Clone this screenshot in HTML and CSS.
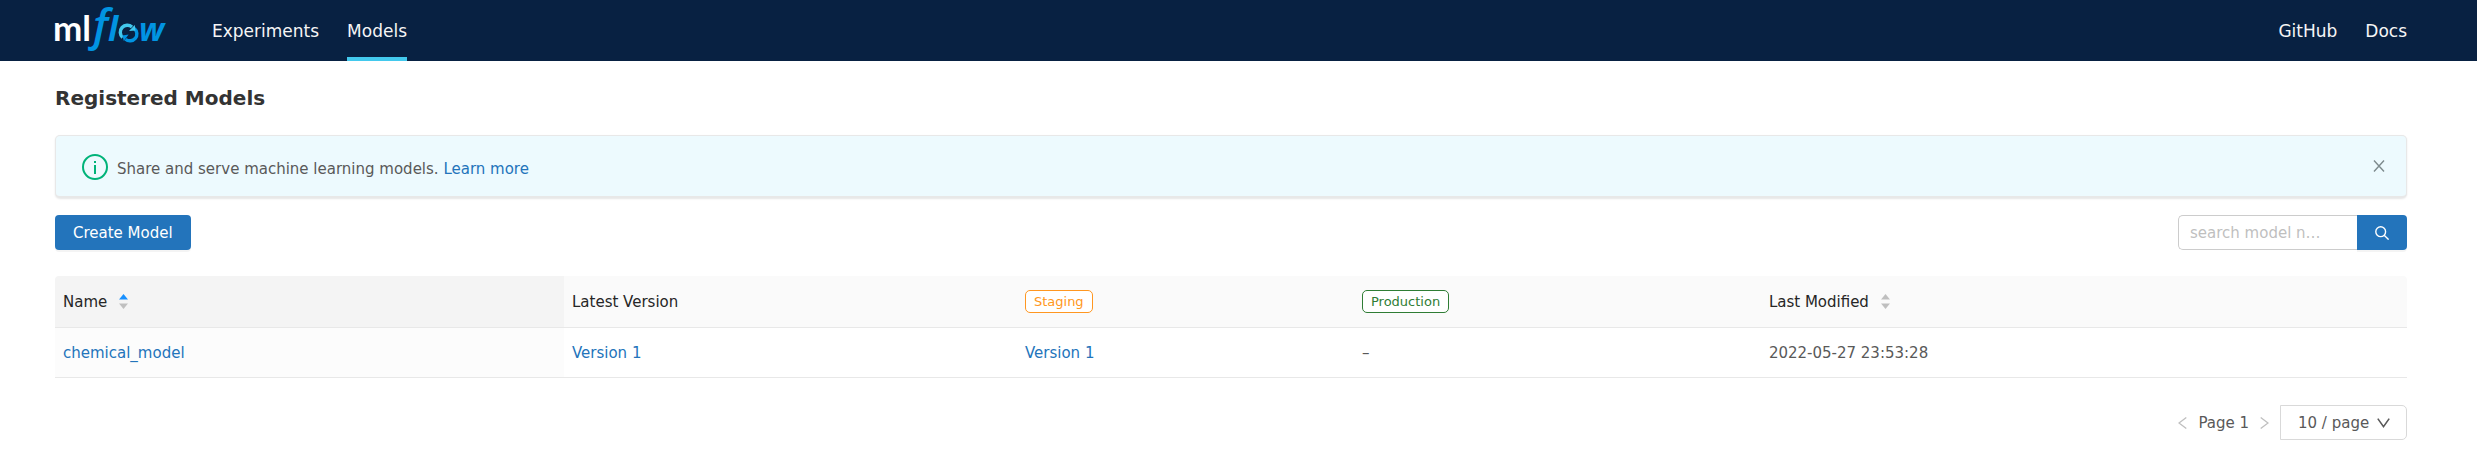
FILE: index.html
```
<!DOCTYPE html>
<html lang="en">
<head>
<meta charset="utf-8">
<title>Registered Models - MLflow</title>
<link rel="stylesheet" href="styles.css">
</head>
<body>
<header class="topbar">
  <a class="logo" href="#" aria-label="mlflow">
    <svg class="logo-mark" width="116" height="61" viewBox="-2 0 116 61">
      <text class="logo-ml" x="-2" y="41">ml</text>
      <text class="logo-f" x="38" y="41">f</text>
      <text class="logo-l" x="53" y="41">l</text>
      <g fill="none" stroke-width="3.4">
        <path class="logo-arc-light" d="M67.600 37.400A6.600 6.600 0 0 1 77 27"/>
        <path class="logo-arc-dark" d="M79.400 28.600A6.600 6.600 0 0 1 70.500 39.200"/>
      </g>
      <path class="logo-tip-light" d="M74 31l6.500-.4-.8-5.600z"/>
      <path class="logo-tip-dark" d="M73.600 34.400l-6.200 1 1.400 5.600z"/>
      <text class="logo-w" x="84" y="41">w</text>
    </svg>
  </a>
  <nav class="nav">
    <a class="nav-link" href="#">Experiments</a>
    <a class="nav-link active" href="#" aria-current="page">Models</a>
  </nav>
  <nav class="nav nav-right">
    <a class="nav-link" href="#">GitHub</a>
    <a class="nav-link" href="#">Docs</a>
  </nav>
</header>
<main class="page">
  <h1 class="title">Registered Models</h1>
  <section class="banner">
    <svg class="info" viewBox="0 0 26 26" width="26" height="26" fill="none" stroke="currentColor" stroke-width="2"><circle cx="13" cy="13" r="12"/><path d="M13 11v9M13 7v2"/></svg>
    <p class="banner-text">Share and serve machine learning models. <a class="link" href="#">Learn more</a></p>
    <button class="close" type="button" aria-label="Close"><svg viewBox="0 0 12 12" width="12" height="12" fill="none" stroke="currentColor" stroke-width="1.4"><path d="M1 .5l10 11M11 .5l-10 11"/></svg></button>
  </section>
  <div class="toolbar">
    <button class="primary" type="button">Create Model</button>
    <form class="search">
      <input class="search-input" type="text" aria-label="Search models" placeholder="search model names or tags">
      <button class="search-button" type="button" aria-label="Search"><svg viewBox="0 0 14 14" width="14" height="14" fill="none" stroke="currentColor" stroke-width="1.4"><circle cx="5.7" cy="5.7" r="4.9"/><path d="M9.2 9.2l4.4 4.4"/></svg></button>
    </form>
  </div>
  <table class="models">
    <colgroup><col class="c-name"><col class="c-latest"><col class="c-staging"><col class="c-production"><col class="c-modified"></colgroup>
    <thead>
      <tr>
        <th class="sorted" scope="col" aria-sort="ascending"><span class="sortable">Name <svg class="sorter" viewBox="0 0 9 15" width="9" height="15"><path class="on" d="M4.500 0L9 5.500H0z"/><path d="M4.500 15L9 9.500H0z"/></svg></span></th>
        <th scope="col">Latest Version</th>
        <th scope="col"><span class="tag staging">Staging</span></th>
        <th scope="col"><span class="tag production">Production</span></th>
        <th scope="col"><span class="sortable">Last Modified <svg class="sorter" viewBox="0 0 9 15" width="9" height="15"><path d="M4.500 0L9 5.500H0z"/><path d="M4.500 15L9 9.500H0z"/></svg></span></th>
      </tr>
    </thead>
    <tbody>
      <tr>
        <td class="sorted"><a class="link" href="#">chemical_model</a></td>
        <td><a class="link" href="#">Version 1</a></td>
        <td><a class="link" href="#">Version 1</a></td>
        <td>–</td>
        <td>2022-05-27 23:53:28</td>
      </tr>
    </tbody>
  </table>
  <div class="pager">
    <button class="step" type="button" aria-label="Previous page" disabled><svg viewBox="0 0 9 12" width="9" height="12" fill="none" stroke="currentColor" stroke-width="1.3"><path d="M8.300 .5L1 6l7.300 5.500"/></svg></button>
    <span>Page 1</span>
    <button class="step" type="button" aria-label="Next page" disabled><svg viewBox="0 0 9 12" width="9" height="12" fill="none" stroke="currentColor" stroke-width="1.3"><path d="M.7 .5L8 6 .7 11.500"/></svg></button>
    <div class="size">
      <select class="size-select" aria-label="Page size"><option>10 / page</option><option>25 / page</option><option>50 / page</option></select>
      <svg class="chevron" viewBox="0 0 13 10" width="13" height="10" fill="none" stroke="currentColor" stroke-width="1.6"><path d="M.8 .6l5.700 8 5.700-8"/></svg>
    </div>
  </div>
</main>
</body>
</html>
```
FILE: styles.css
```
* { box-sizing: border-box; }
body {
  margin: 0;
  background: #fff;
  color: #595959;
  font: 15px/22px "DejaVu Sans", sans-serif;
}
button, input, select { font: inherit; color: inherit; margin: 0; }
svg { display: block; flex: none; }
.topbar {
  display: flex;
  align-items: stretch;
  height: 61px;
  padding: 0 70px 0 53px;
  background: #082142;
}
.logo { width: 159px; }
.logo-mark { overflow: visible; }
.logo-ml { font: 700 35px Lato, sans-serif; fill: #fff; }
.logo-f { font: italic 600 44px "Open Sans", sans-serif; fill: #0194e2; }
.logo-l { font: italic 700 34px "Open Sans", sans-serif; fill: #0194e2; }
.logo-w { font: italic 700 32px "Open Sans", sans-serif; fill: #0194e2; }
.logo-arc-light { stroke: #43c9ed; }
.logo-arc-dark { stroke: #0194e2; }
.logo-tip-light { fill: #43c9ed; }
.logo-tip-dark { fill: #0194e2; }
.nav { display: flex; gap: 28px; }
.nav-right { margin-left: auto; }
.nav-link {
  display: flex;
  align-items: center;
  border-bottom: 4px solid transparent;
  padding-top: 4px;
  color: #f5f5f5;
  font-size: 17px;
  text-decoration: none;
}
.nav-link.active { border-color: #43c9ed; }
.page { padding: 24px 70px 0 55px; }
.title { margin: 0 0 23px; font-size: 20px; line-height: 27px; color: #333; }
.banner {
  display: flex;
  align-items: center;
  height: 63px;
  padding: 2px 21px 0 26px;
  background: #edfafe;
  border: 1px solid #e8e8e8;
  border-bottom-width: 2px;
  border-radius: 5px;
  box-shadow: 0 1px 2px #0000001a;
}
.info { color: #00b379; }
.banner-text { margin: 3px 0 0 9px; }
.close {
  margin: 0 0 2px auto;
  padding: 0;
  border: 0;
  background: none;
  color: #7d8a8d;
}
.link { color: #2374bb; text-decoration: none; }
.toolbar {
  display: flex;
  justify-content: space-between;
  margin: 17px 0 26px;
}
.primary, .search-button {
  height: 35px;
  border: 0;
  border-radius: 4px;
  background: #2374bb;
  color: #fff;
  box-shadow: 0 2px 0 #0000000b;
}
.primary { padding: 0 18px; }
.search { display: flex; width: 229px; }
.search-input {
  flex: 1;
  min-width: 0;
  height: 35px;
  padding: 0 34px 0 11px;
  border: 1px solid #ccc;
  border-right: 0;
  border-radius: 5px 0 0 5px;
  background: #fff;
  text-overflow: ellipsis;
}
.search-input::placeholder { color: #bfbfbf; }
.search-button {
  display: grid;
  place-items: center;
  width: 50px;
  padding: 0;
  border-radius: 0 4px 4px 0;
}
.models {
  width: 100%;
  table-layout: fixed;
  border-collapse: separate;
  border-spacing: 0;
}
.c-name { width: 21.64%; }
.c-latest { width: 19.26%; }
.c-staging { width: 14.33%; }
.c-production { width: 17.3%; }
.models th, .models td {
  padding: 0 8px;
  border-bottom: 1px solid #e8e8e8;
  text-align: left;
  font-weight: 400;
}
.models th { height: 52px; background: #fafafa; color: #262626; }
.models td { height: 50px; }
.models th:first-child { border-top-left-radius: 4px; }
.models th:last-child { border-top-right-radius: 4px; }
.models th.sorted { background: #f4f4f4; }
.models td.sorted { background: #fcfcfc; }
.sortable { display: flex; align-items: center; gap: 12px; }
.sorter { fill: #bfbfbf; }
.sorter .on { fill: #1890ff; }
.tag {
  display: block;
  width: max-content;
  padding: 0 8px;
  border: 1px solid;
  border-radius: 5px;
  background: #fff;
  font-size: 13px;
  line-height: 21px;
}
.models .staging { color: #ff9721; }
.models .production { color: #2f7d35; }
.pager {
  display: flex;
  justify-content: flex-end;
  align-items: center;
  margin-top: 27px;
}
.step { padding: 0 11px; border: 0; background: none; color: #bfbfbf; }
.size { display: grid; align-items: center; width: 127px; }
.size-select {
  grid-area: 1 / 1;
  height: 35px;
  padding: 0 17px;
  border: 1px solid #d9d9d9;
  border-radius: 0 5px 5px 0;
  background: #fff;
  appearance: none;
}
.chevron { grid-area: 1 / 1; justify-self: end; margin-right: 17px; pointer-events: none; }
```
